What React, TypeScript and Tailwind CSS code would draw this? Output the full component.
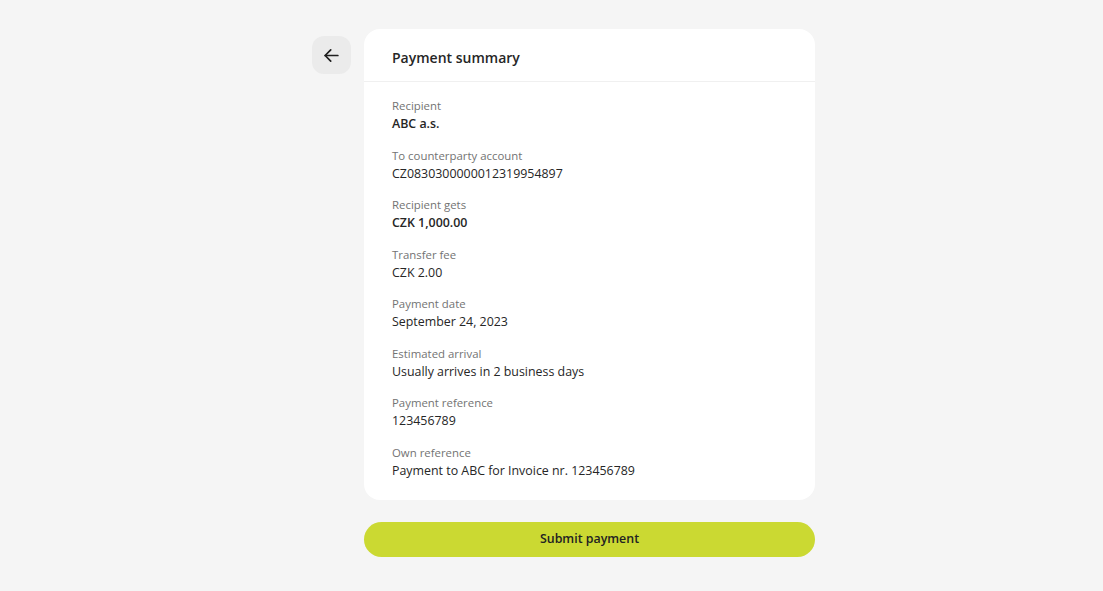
import React from "react";

const rows = [
  { label: "Recipient", value: "ABC a.s.", bold: true },
  { label: "To counterparty account", value: "CZ0830300000012319954897" },
  { label: "Recipient gets", value: "CZK 1,000.00", bold: true },
  { label: "Transfer fee", value: "CZK 2.00" },
  { label: "Payment date", value: "September 24, 2023" },
  { label: "Estimated arrival", value: "Usually arrives in 2 business days" },
  { label: "Payment reference", value: "123456789" },
  { label: "Own reference", value: "Payment to ABC for Invoice nr. 123456789" },
];

export default function App() {
  return (
    <div
      className="min-h-screen w-full bg-[#f5f5f5] text-[#222]"
      style={{ fontFamily: '"Open Sans", "Noto Sans", sans-serif' }}
    >
      <div className="flex items-start gap-[13px] pl-[312px] pt-[29px]">
        <button className="mt-[7px] flex h-[38px] w-[39px] items-center justify-center rounded-[12px] bg-[#ebebeb]">
          <svg width="19" height="19" viewBox="0 0 24 24" fill="none" stroke="#1f1f1f" strokeWidth="2.2" strokeLinecap="round" strokeLinejoin="round">
            <path d="M20 12H4" />
            <path d="M11 5l-7 7 7 7" />
          </svg>
        </button>

        <div className="flex w-[451px] flex-col">
          <div className="rounded-[16px] bg-white">
            <div className="flex h-[53px] items-center border-b border-[#f0f0f0] px-[28px] pt-[4px]">
              <h1 className="text-[14px] font-semibold text-[#262626]">Payment summary</h1>
            </div>
            <div className="flex flex-col gap-[12px] px-[28px] pt-[14px] pb-[20px]">
              {rows.map((r) => (
                <div key={r.label} className="flex flex-col">
                  <span className="text-[11.4px] leading-[19px] text-[#737373]">{r.label}</span>
                  <span
                    className={`text-[12.4px] leading-[18.5px] text-[#262626] ${r.bold ? "font-semibold" : ""}`}
                  >
                    {r.value}
                  </span>
                </div>
              ))}
            </div>
          </div>

          <button className="mt-[22px] h-[35px] w-full rounded-full bg-[#cbd932] text-[12.4px] font-semibold text-[#222]">
            Submit payment
          </button>
        </div>
      </div>
    </div>
  );
}
